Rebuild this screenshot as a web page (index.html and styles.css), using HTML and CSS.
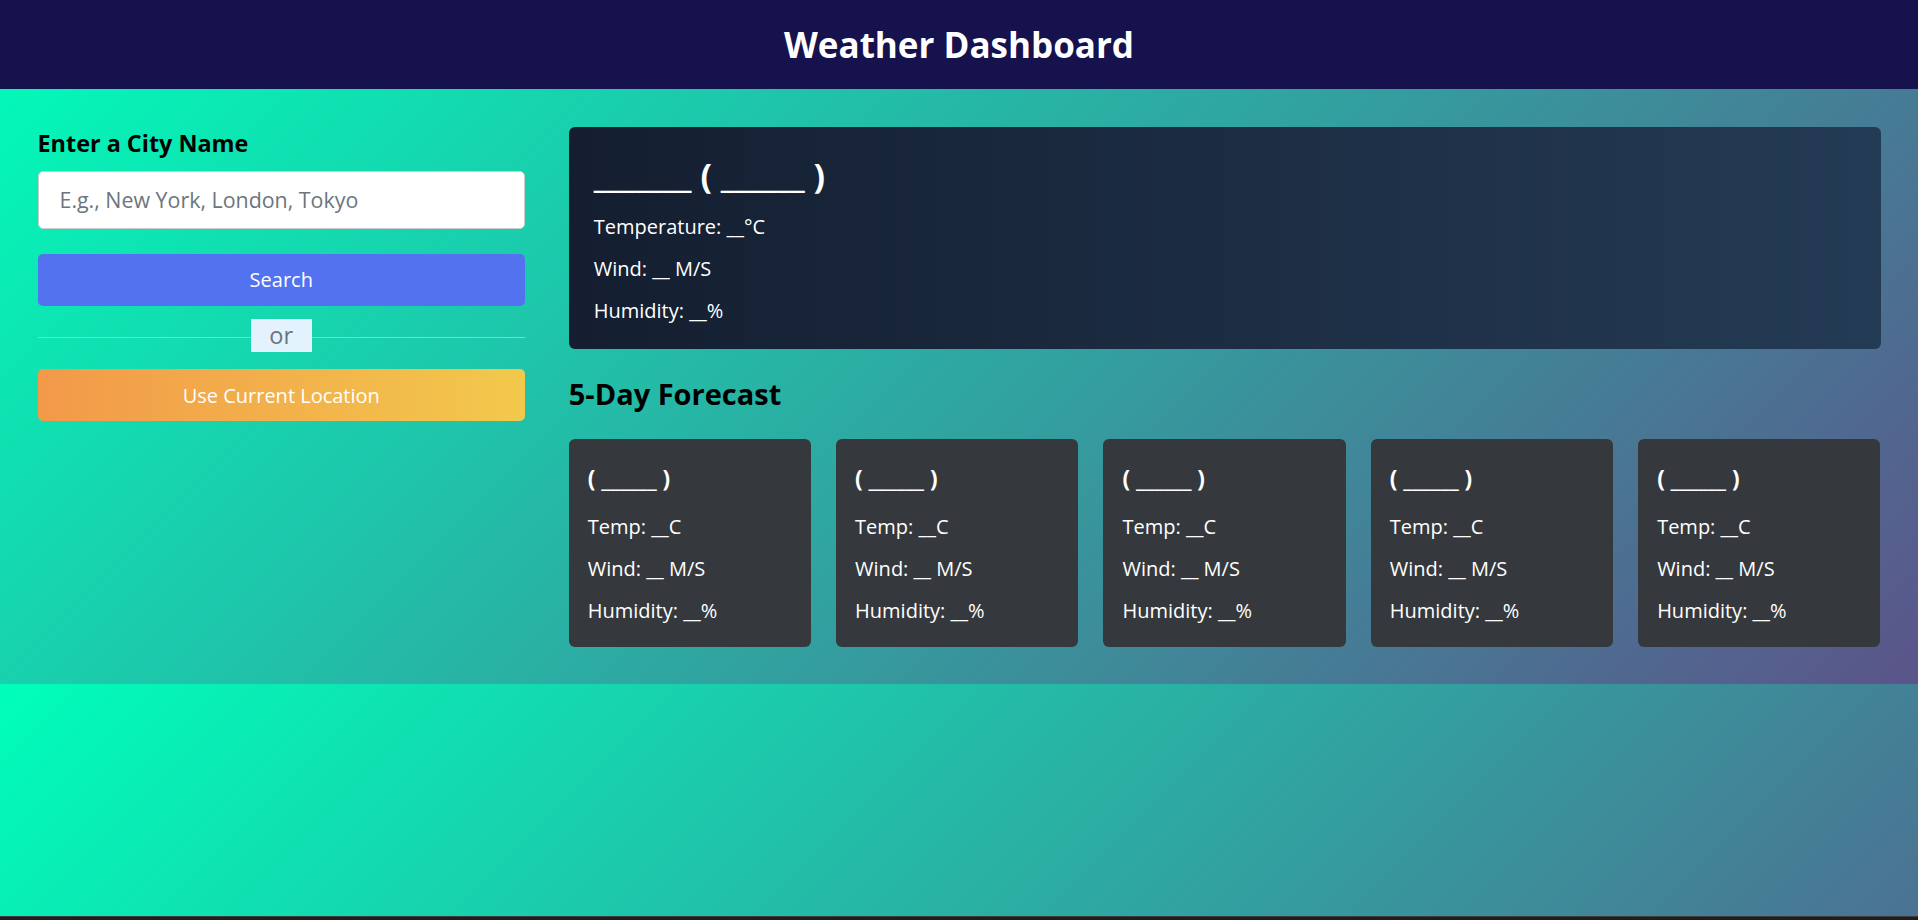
FILE: index.html
```html
<!DOCTYPE html>
<html lang="en">
<head>
<meta charset="utf-8">
<title>Weather Dashboard</title>
<link rel="stylesheet" href="styles.css">
</head>
<body>
<header class="topbar"><h1 class="title">Weather Dashboard</h1></header>
<main class="container">
  <section class="weather-input">
    <h3 class="label">Enter a City Name</h3>
    <input class="city-input" type="text" placeholder="E.g., New York, London, Tokyo">
    <button class="btn search-btn">Search</button>
    <div class="separator"><span class="or">or</span></div>
    <button class="btn location-btn">Use Current Location</button>
  </section>
  <section class="weather-data">
    <div class="current-weather">
      <h2 class="cw-title">_______ ( ______ )</h2>
      <h6 class="line">Temperature: __°C</h6>
      <h6 class="line">Wind: __ M/S</h6>
      <h6 class="line">Humidity: __%</h6>
    </div>
    <h2 class="section-title">5-Day Forecast</h2>
    <ul class="cards">
      <li class="card"><h3 class="card-title">( ______ )</h3><h6 class="line">Temp: __C</h6><h6 class="line">Wind: __ M/S</h6><h6 class="line">Humidity: __%</h6></li>
      <li class="card"><h3 class="card-title">( ______ )</h3><h6 class="line">Temp: __C</h6><h6 class="line">Wind: __ M/S</h6><h6 class="line">Humidity: __%</h6></li>
      <li class="card"><h3 class="card-title">( ______ )</h3><h6 class="line">Temp: __C</h6><h6 class="line">Wind: __ M/S</h6><h6 class="line">Humidity: __%</h6></li>
      <li class="card"><h3 class="card-title">( ______ )</h3><h6 class="line">Temp: __C</h6><h6 class="line">Wind: __ M/S</h6><h6 class="line">Humidity: __%</h6></li>
      <li class="card"><h3 class="card-title">( ______ )</h3><h6 class="line">Temp: __C</h6><h6 class="line">Wind: __ M/S</h6><h6 class="line">Humidity: __%</h6></li>
    </ul>
  </section>
</main>
<div class="chrome-edge"></div>
</body>
</html>
```
FILE: styles.css
```css
* { margin: 0; padding: 0; box-sizing: border-box; }
body {
  font-family: "Open Sans", "Noto Sans", sans-serif;
  background: linear-gradient(135deg, #00feba, #5b548a);
}
.topbar {
  background: #16124e;
  height: 89px;
  display: flex;
  align-items: center;
  justify-content: center;
}
.title { color: #fff; font-size: 35px; font-weight: 700; }
.container {
  display: flex;
  gap: 43.75px;
  padding: 37.5px;
}
.weather-input { width: 487.5px; flex-shrink: 0; }
.label { font-size: 23.4px; font-weight: 700; color: #000; }
.city-input {
  display: block;
  width: 100%;
  height: 57.5px;
  margin: 12.5px 0 25px;
  padding: 0 21px;
  font-family: inherit;
  font-size: 21.4px;
  border: 1px solid #ccc;
  border-radius: 5px;
  background: #fff;
  outline: none;
}
.city-input::placeholder { color: #6c757d; }
.btn {
  display: block;
  width: 100%;
  padding: 12.5px 0;
  border: none;
  border-radius: 5px;
  font-family: inherit;
  font-size: 20px;
  line-height: 27.2px;
  color: #fff;
}
.search-btn { background: #5372f0; }
.location-btn { background: linear-gradient(to right, #f2994a, #f2c94c); }
.separator {
  height: 1px;
  margin: 31.25px 0;
  background: #bbbbbb;
  display: flex;
  align-items: center;
  justify-content: center;
}
.or {
  color: #6c757d;
  font-size: 23.6px;
  line-height: 32.5px;
  padding: 0 18.75px;
  margin-top: -4px;
  background: #e3f2fd;
}
.weather-data { flex: 1; min-width: 0; }
.current-weather {
  color: #fff;
  background: linear-gradient(to right, #141e30, #243b55);
  border-radius: 6px;
  padding: 25px;
}
.cw-title { font-size: 34px; font-weight: 700; line-height: 46.3px; }
.line { font-size: 20px; font-weight: 500; line-height: 27.2px; margin-top: 15px; }
.section-title { font-size: 29px; font-weight: 700; color: #000; margin: 25px 0 25px; line-height: 39.5px; }
.cards { list-style: none; display: flex; gap: 25px; }
.card {
  flex: 1;
  color: #fff;
  background: #35393d;
  border-radius: 6px;
  padding: 25.5px 19px 22px 19px;
}
.card-title { font-size: 22.5px; font-weight: 700; line-height: 30px; }
.card-title + .line { margin-top: 18.5px; }
.chrome-edge {
  position: fixed;
  left: 0; right: 0; bottom: 0;
  height: 4px;
  background: #1e1e1e;
  border-top: 1px solid #3c3c3c;
}
```
